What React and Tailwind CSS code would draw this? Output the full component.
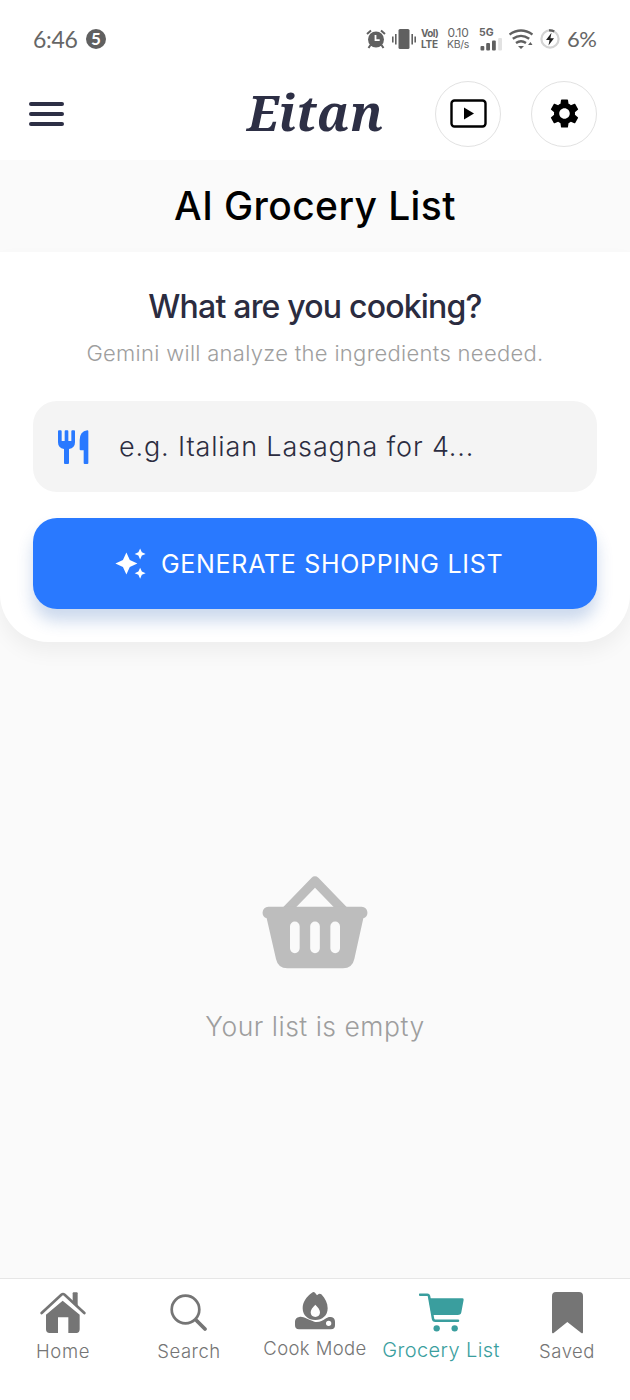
import { useState } from "react"
import { MdAutoAwesome, MdSettings } from "react-icons/md"

function StatusBar() {
  return (
    <div className="flex h-[70px] items-center pt-2 pl-[33px] font-['Lato',sans-serif] text-[#666]">
      <span className="w-[46px] text-[23px] leading-none tracking-[-0.3px] whitespace-nowrap">6:46</span>
      <span className="ml-[7px] flex h-5 w-5 items-center justify-center rounded-full bg-[#606060] pb-px text-[17px] leading-none font-bold text-white">
        5
      </span>

      {/* Alarm */}
      <svg className="ml-[260px] h-5 w-5" viewBox="0 0 20 20" fill="none" stroke="#606060">
        <circle cx="10" cy="10.5" r="8" fill="#606060" stroke="none" />
        <path d="M1 5 5 1.5M19 5l-4-3.5M4.5 16l-2 3M15.5 16l2 3" strokeWidth="2" />
        <path d="M9.5 6v5.2h4.2" stroke="#fff" strokeWidth="1.8" />
      </svg>

      {/* Vibrate */}
      <svg className="ml-[6px] h-5 w-6" viewBox="0 0 24 20" fill="#606060">
        <rect x="6.5" y="0" width="11" height="20" rx="1.5" />
        <rect x="0" y="7.5" width="1.6" height="6" />
        <rect x="3" y="5" width="1.6" height="10.5" />
        <rect x="19.4" y="5" width="1.6" height="10.5" />
        <rect x="22.4" y="7.5" width="1.6" height="6" />
      </svg>

      <div className="ml-[5px] flex w-[18px] flex-col font-['Inter',sans-serif] text-[10px] leading-[11px] font-bold tracking-[-0.6px] whitespace-nowrap">
        <span>Vol)</span>
        <span className="tracking-[-0.2px]">LTE</span>
      </div>
      <div className="ml-[7px] flex w-6 flex-col items-center font-['Inter',sans-serif] whitespace-nowrap">
        <span className="text-[12px] leading-[12px] tracking-[-0.3px]">0.10</span>
        <span className="text-[10.5px] leading-[12px] tracking-[-0.3px]">KB/s</span>
      </div>

      <div className="ml-[9px] flex w-6 flex-col pt-px font-['Inter',sans-serif] text-[10.5px] leading-[10px] font-bold">
        <span>5G</span>
        <svg className="h-[13px] w-6" viewBox="0 0 24 13" fill="#606060">
          <rect x="1.5" y="8" width="3.8" height="4.5" rx="1" />
          <rect x="7.2" y="5" width="3.8" height="7.5" rx="1" />
          <rect x="13" y="2.5" width="3.8" height="10" rx="1" />
          <rect x="19.2" y="0" width="3.8" height="12.5" rx="1" fill="#e2e2e2" />
        </svg>
      </div>

      {/* Wifi */}
      <svg className="ml-[6px] h-5 w-6" viewBox="0 0 24 20" fill="none" stroke="#606060" strokeWidth="2.4">
        <path d="M.5 5.5Q12-2.5 23.5 5.5" />
        <path d="M3.8 9.8Q12 4 20.2 9.8" />
        <path d="M7 14Q12 10.5 17 14" />
        <path d="M9 17h6l-3 3zM19 16h4.5L21.5 13z" fill="#606060" stroke="none" />
      </svg>

      {/* Battery */}
      <svg className="ml-[7px] h-5 w-5" viewBox="0 0 20 20" fill="none">
        <circle cx="10" cy="10" r="8.6" stroke="#d4d4d4" strokeWidth="2.2" />
        <path d="M9 1.4a8.6 8.6 0 0 1 5.2 1.1" stroke="#606060" strokeWidth="2.4" />
        <path d="M11.5 3.8 6 11h3.5l-1 5.5L14 9.2h-3.6z" fill="#222" />
      </svg>
      <span className="ml-[7px] text-[22px] leading-none tracking-[-0.6px]">6%</span>
    </div>
  )
}

function Header() {
  return (
    <header className="flex h-[90px] items-center pb-[3px] pl-[29px]">
      <button className="flex w-[35px] flex-col gap-[6px]" aria-label="Menu">
        <span className="h-1 rounded-full bg-[#2d2f45]" />
        <span className="h-1 rounded-full bg-[#2d2f45]" />
        <span className="h-1 rounded-full bg-[#2d2f45]" />
      </button>
      <div className="ml-[183px] w-[136px] pb-[2px] font-['Noto_Serif','DejaVu_Serif_Condensed','DejaVu_Serif',serif] text-[49px] leading-none font-bold tracking-[0.4px] text-[#2d2f45] italic">
        Eitan
      </div>
      <button
        className="ml-[52px] flex h-[66px] w-[66px] items-center justify-center rounded-full border-[1.5px] border-[#e2e2e2]"
        aria-label="Videos"
      >
        <svg className="h-[29px] w-[37px]" viewBox="0 0 37 29">
          <rect x="1.5" y="1.5" width="34" height="26" rx="3" fill="none" stroke="#000" strokeWidth="2.4" />
          <path d="M14 8.5v12l10-6z" />
        </svg>
      </button>
      <button
        className="ml-[30px] flex h-[66px] w-[66px] items-center justify-center rounded-full border-[1.5px] border-[#e2e2e2]"
        aria-label="Settings"
      >
        <MdSettings className="h-[35px] w-[35px] text-black" />
      </button>
    </header>
  )
}

function CutleryIcon() {
  return (
    <svg className="h-[34px] w-[31px] shrink-0 text-[#2979ff]" viewBox="0 0 93 102" fill="currentColor">
      <path d="M0 4q0-3 3-3h5q3 0 3 3v29h9V4q0-3 3-3h5q3 0 3 3v29h9V4q0-3 3-3h5q3 0 3 3v33q0 17-18 20v42q0 3-3 3h-9q-3 0-3-3V57Q0 54 0 37z" />
      <path d="M88 1q3 0 3 3v95q0 3-3 3h-8q-3 0-3-3V61H68q-3 0-3-3V30Q65 5 88 1z" />
    </svg>
  )
}

function HomeIcon() {
  return (
    <svg className="h-[42px] w-[46px]" viewBox="0 0 138 126" fill="currentColor">
      <path d="M68 26 18 68v44q0 11 11 11h25V76h31v47h24q10 0 10-11V68z" />
      <path d="M5 63 64 8q5-4 10 0l59 55" fill="none" stroke="currentColor" strokeWidth="8" strokeLinecap="round" />
      <path d="M98 4q0-3 3-3h9q3 0 3 3v43L98 32z" />
    </svg>
  )
}

function SearchIcon() {
  return (
    <svg className="h-[38px] w-[38px]" viewBox="0 0 38 38" fill="none" stroke="currentColor">
      <circle cx="15.5" cy="15.5" r="13.8" strokeWidth="2.7" />
      <path d="m25 25 3 3" strokeWidth="3" />
      <path d="m27 27 8 8" strokeWidth="3.8" strokeLinecap="round" />
    </svg>
  )
}

function CookIcon() {
  return (
    <svg className="h-[38px] w-[40px]" viewBox="0 0 120 114" fill="currentColor">
      <path
        fillRule="evenodd"
        d="M51 2q5-4 9 0l6 8 5-4q4-2 8 1c12 12 19 27 19 42 0 22-16 35-37 35S23 71 23 49C23 30 34 14 51 2zM61 38C53 46 47 53 47 61c0 9 6 14 14 14s14-5 14-14c0-8-6-15-14-23z"
      />
      <path
        fillRule="evenodd"
        d="M13 75c12-3 24 8 45 14 14 3 24-3 33-9 7-5 12-6 17-5 8 1 12 7 12 14v11q0 12-12 12H12q-12 0-12-12V89c0-7 5-13 13-14zM101 86a8 8 0 1 0 0 16 8 8 0 0 0 0-16z"
      />
    </svg>
  )
}

function CartIcon() {
  return (
    <svg className="h-[39px] w-[45px]" viewBox="0 0 135 117">
      <path d="M3 5h22q4 0 5 4l12 68q1 6 7 6h68" fill="none" stroke="currentColor" strokeWidth="7.5" strokeLinecap="round" />
      <path d="M29 16h101q4 0 4 4l-7 38q-1 8-11 8H38z" fill="currentColor" />
      <circle cx="53" cy="106" r="9.5" fill="currentColor" />
      <circle cx="107" cy="106" r="9.5" fill="currentColor" />
    </svg>
  )
}

function SavedIcon() {
  return (
    <svg className="h-[42px] w-[31px]" viewBox="0 0 93 126" fill="currentColor">
      <path d="M12 0h69q12 0 12 12v108q0 7-6 2L46 90 6 122q-6 5-6-2V12Q0 0 12 0z" />
    </svg>
  )
}

function BasketIcon() {
  return (
    <svg className="h-[94px] w-[106px] text-[#bdbdbd]" viewBox="0 0 318 282" fill="currentColor">
      <path d="M74 106 159 18l85 88" fill="none" stroke="currentColor" strokeWidth="28" strokeLinejoin="round" />
      <path
        fillRule="evenodd"
        d="M19 95h280a18 18 0 0 1 5 35l-27 122q-6 28-34 28H76q-28 0-34-28L14 130a18 18 0 0 1 5-35zM84 154v66a14.5 14.5 0 0 0 29 0v-66a14.5 14.5 0 0 0-29 0zM144.5 154v66a14.5 14.5 0 0 0 29 0v-66a14.5 14.5 0 0 0-29 0zM205 154v66a14.5 14.5 0 0 0 29 0v-66a14.5 14.5 0 0 0-29 0z"
      />
    </svg>
  )
}

const navItems = [
  { label: "Home", icon: HomeIcon, iconBox: "h-[42px] mt-[13px]", text: "mt-[6px] text-[18.5px] tracking-[0.6px]" },
  { label: "Search", icon: SearchIcon, iconBox: "h-[38px] mt-[15px]", text: "mt-[8px] text-[18.5px] tracking-[0.5px]" },
  { label: "Cook Mode", icon: CookIcon, iconBox: "h-[38px] mt-[13px]", text: "mt-[7px] text-[18.5px] tracking-[0.4px]" },
  { label: "Grocery List", icon: CartIcon, iconBox: "h-[39px] mt-[14px]", text: "mt-[7px] text-[20px] tracking-[0.4px]" },
  { label: "Saved", icon: SavedIcon, iconBox: "h-[42px] mt-[13px]", text: "mt-[6px] text-[18.5px] tracking-[0.5px]" },
]

function BottomNav({ active, onChange }) {
  return (
    <nav className="grid h-[122px] grid-cols-5 border-t border-[#e6e6e6] bg-white">
      {navItems.map((item) => {
        const Icon = item.icon
        return (
          <button
            key={item.label}
            onClick={() => onChange(item.label)}
            className={`flex flex-col items-center ${active === item.label ? "text-[#3a9e9e]" : "text-[#757575]"}`}
          >
            <span className={`flex items-center ${item.iconBox}`}>
              <Icon />
            </span>
            <span className={`leading-[22px] font-light whitespace-nowrap ${item.text}`}>{item.label}</span>
          </button>
        )
      })}
    </nav>
  )
}

function App() {
  const [activeTab, setActiveTab] = useState("Grocery List")
  const [dish, setDish] = useState("")

  return (
    <div className="flex h-[1400px] w-[630px] flex-col overflow-hidden bg-[#fafafa] font-['Inter',sans-serif]">
      <div className="bg-white">
        <StatusBar />
        <Header />
      </div>

      <h1 className="flex h-[92px] items-center justify-center text-[39px] font-medium tracking-[0.4px] text-black">
        AI Grocery List
      </h1>

      {/* Prompt card */}
      <section className="flex h-[390px] flex-col items-center rounded-b-[48px] bg-white px-[33px] pt-[35px] shadow-[0_10px_20px_rgba(0,0,0,0.05)]">
        <h2 className="text-[32px] leading-[40px] font-medium tracking-[-0.8px] text-[#2b2c40]">
          What are you cooking?
        </h2>
        <p className="mt-[11px] text-[22px] leading-[30px] font-light tracking-[0.3px] text-[#9e9e9e]">
          Gemini will analyze the ingredients needed.
        </p>
        <label className="mt-[33px] flex h-[91px] w-full items-center rounded-[24px] bg-[#f4f4f4] pl-[25px]">
          <CutleryIcon />
          <input
            value={dish}
            onChange={(e) => setDish(e.target.value)}
            placeholder="e.g. Italian Lasagna for 4..."
            className="ml-[30px] flex-1 pt-[2px] text-[27px] font-light tracking-[0.85px] text-[#2b2c40] outline-none placeholder:text-[#2b2c40]"
          />
        </label>
        <button className="mt-[26px] flex h-[90.5px] w-full shrink-0 items-center rounded-[24px] bg-[#2979ff] pt-px pl-[81px] text-white shadow-[0_12px_16px_rgba(41,98,180,0.24)]">
          <MdAutoAwesome className="h-[33px] w-[33px]" />
          <span className="ml-[14px] pt-px text-[25px] tracking-[0.7px] whitespace-nowrap">
            GENERATE SHOPPING LIST
          </span>
        </button>
      </section>

      {/* Empty state */}
      <main className="flex flex-1 flex-col items-center pt-[233px]">
        <BasketIcon />
        <p className="mt-[41px] text-[26.5px] leading-[32px] font-light tracking-[0.5px] text-[#9e9e9e]">
          Your list is empty
        </p>
      </main>

      <BottomNav active={activeTab} onChange={setActiveTab} />
    </div>
  )
}

export default App
